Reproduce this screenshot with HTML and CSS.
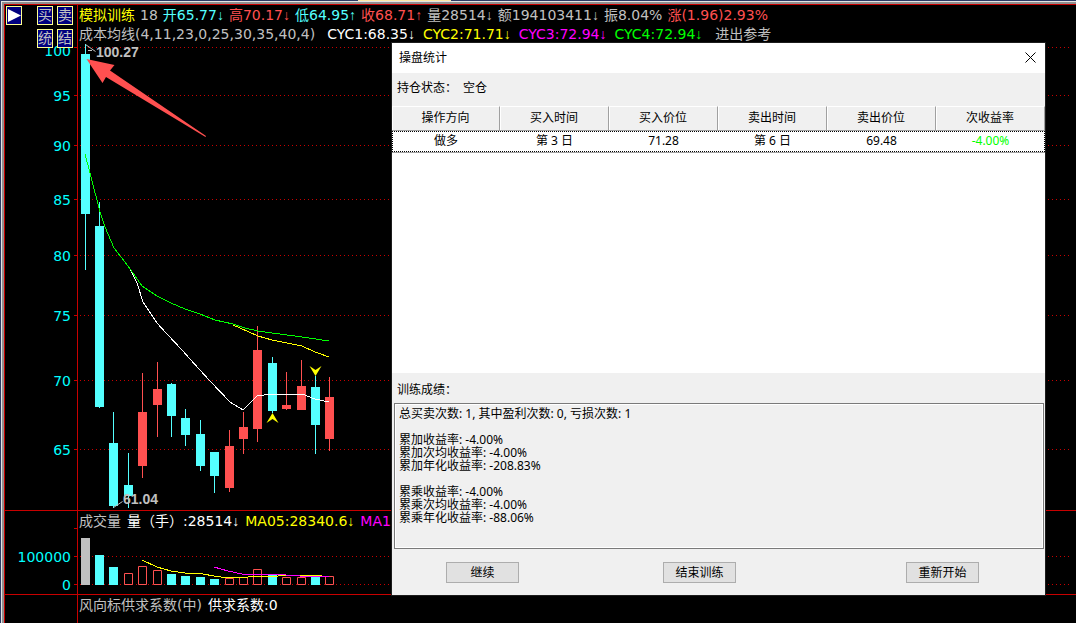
FILE: index.html
```html
<!DOCTYPE html>
<html lang="zh-CN">
<head>
    <meta charset="UTF-8">
    <meta name="viewport" content="width=device-width, initial-scale=1.0">
    <title>模拟训练</title>
    <link rel="stylesheet" href="styles.css">
</head>
<body>
    <div class="topbar"><span class="tab"></span></div>
    <main class="terminal">
        <!-- K line -->
        <section class="panel price">
            <svg class="plot">
                <g transform="translate(-5 -5)">
                    <g class="grid">
                        <path d="M74 47.5h3M74 95.5h3M74 145.5h3M74 199.5h3M74 255.5h3M74 315.5h3M74 380.5h3M74 449.5h3"/>
                        <g class="dots">
                            <line x1="80" y1="47.5" x2="100%" y2="47.5"/>
                            <line x1="80" y1="95.5" x2="100%" y2="95.5"/>
                            <line x1="80" y1="145.5" x2="100%" y2="145.5"/>
                            <line x1="80" y1="199.5" x2="100%" y2="199.5"/>
                            <line x1="80" y1="255.5" x2="100%" y2="255.5"/>
                            <line x1="80" y1="315.5" x2="100%" y2="315.5"/>
                            <line x1="80" y1="380.5" x2="100%" y2="380.5"/>
                            <line x1="80" y1="449.5" x2="100%" y2="449.5"/>
                        </g>
                    </g>
                    <g class="scale">
                        <text x="71" y="56">100</text>
                        <text x="71" y="101">95</text>
                        <text x="71" y="151">90</text>
                        <text x="71" y="205">85</text>
                        <text x="71" y="261">80</text>
                        <text x="71" y="321">75</text>
                        <text x="71" y="386">70</text>
                        <text x="71" y="455">65</text>
                    </g>
                    <!-- falling days -->
                    <path class="down" d="M81 54h9v160h-9zM85 44h1v226h-1zM95 226h9v181h-9zM99 202h1v206h-1zM109 443h9v63h-9zM113 412h1v96h-1zM124 485h9v11h-9zM128 453h1v55h-1zM167 384h9v32h-9zM171 383h1v54h-1zM181 418h9v17h-9zM185 409h1v37h-1zM196 434h9v32h-9zM200 420h1v51h-1zM210 452h9v24h-9zM214 452h1v41h-1zM268 363h9v48h-9zM272 357h1v56h-1zM311 387h9v38h-9zM315 376h1v78h-1z"/>
                    <!-- rising days -->
                    <path class="up" d="M138 412h9v54h-9zM142 373h1v105h-1zM153 389h9v16h-9zM157 362h1v75h-1zM225 446h9v42h-9zM229 430h1v62h-1zM239 427h9v12h-9zM243 412h1v42h-1zM253 350h9v79h-9zM257 326h1v116h-1zM282 405h9v4h-9zM286 372h1v38h-1zM297 386h9v24h-9zM301 360h1v50h-1zM325 397h9v42h-9zM329 377h1v74h-1z"/>
                    <polyline class="line white" points="129,267 137,283 143,302 157,323 167,334 182,350 190,359 210,381 230,402 243,410 257,396 272,394 287,395 302,394 315,399 329,402"/>
                    <polyline class="line yellow" points="233,325 240,328 258,336 272,340 287,343 302,346 315,352 329,357"/>
                    <polyline class="line green" points="85,154 90,173 100,212 105,227 114,248 128,266 142,286 157,296 171,303 185,309 200,314 215,320 233,324 245,328 258,331 272,333 287,335 302,337 329,341"/>
                    <!-- buy and sell marks -->
                    <path class="mark" d="M272.5 413l3 5 3 5-6-4-6 4 3-5z"/>
                    <path class="mark" d="M315.5 376l-3-5-3-5 6 4 6-4-3 5z"/>
                    <path class="leader" d="M85.5 44.5l10 7M88 50.5h4M113.5 507.5l9-6"/>
                    <text class="tag" x="96" y="57">100.27</text>
                    <text class="tag" x="123" y="504">61.04</text>
                    <polygon class="pointer" points="86.5,59 114.5,65 110,70.5 206,136 205.5,137 106,77 102.5,83"/>
                </g>
            </svg>
            <div class="tools">
                <button type="button" class="tool play" aria-label="播放"><svg width="14" height="17"><path d="M1 2L14 8.5 1 15z"/></svg></button>
                <button type="button" class="tool">买</button>
                <button type="button" class="tool">卖</button>
                <button type="button" class="tool second">统</button>
                <button type="button" class="tool">结</button>
            </div>
            <div class="info">
                <p class="quote">
                    <span class="c-yellow">模拟训练</span>
                    <span>18</span>
                    <span class="c-cyan">开65.77<i>↓</i></span>
                    <span class="c-red">高70.17<i>↓</i></span>
                    <span class="c-cyan">低64.95<i>↑</i></span>
                    <span class="c-red">收68.71<i>↑</i></span>
                    <span>量28514<i>↓</i></span>
                    <span>额194103411<i>↓</i></span>
                    <span>振8.04%</span>
                    <span class="c-red">涨(1.96)2.93%</span>
                </p>
                <p class="averages">
                    <span class="params">成本均线(4,11,23,0,25,30,35,40,4)</span>
                    <span class="c-white">CYC1:68.35<i>↓</i></span>
                    <span class="c-yellow">CYC2:71.71<i>↓</i></span>
                    <span class="c-magenta">CYC3:72.94<i>↓</i></span>
                    <span class="c-green">CYC4:72.94<i>↓</i></span>
                    <span class="ref">进出参考</span>
                </p>
            </div>
        </section>

        <!-- volume -->
        <section class="panel volume">
            <svg class="plot">
                <g transform="translate(-5 -511)">
                    <g class="grid">
                        <path d="M74 528.5h3M74 556.5h3M74 584.5h3"/>
                        <g class="dots">
                            <line x1="80" y1="556.5" x2="100%" y2="556.5"/>
                            <line x1="80" y1="584.5" x2="100%" y2="584.5"/>
                        </g>
                    </g>
                    <g class="scale">
                        <text x="71" y="562">100000</text>
                        <text x="71" y="590">0</text>
                    </g>
                    <path class="flat" d="M81 538h9v47h-9z"/>
                    <path class="down" d="M95 555h9v30h-9zM109 567h9v18h-9zM167 574h9v11h-9zM181 576h9v9h-9zM196 577h9v8h-9zM210 579h9v6h-9zM268 575h9v10h-9zM311 577h9v8h-9z"/>
                    <path class="hollow" d="M124.5 573.5h8v11h-8zM138.5 566.5h8v18h-8zM153.5 570.5h8v14h-8zM225.5 578.5h8v6h-8zM239.5 577.5h8v7h-8zM253.5 569.5h8v15h-8zM282.5 577.5h8v7h-8zM297.5 577.5h8v7h-8zM325.5 576.5h8v8h-8z"/>
                    <polyline class="line yellow" points="142,560 157,567 171,571 185,573 203,574 214,576 228,578 248,577 258,576 278,576 295,575 322,575"/>
                    <polyline class="line magenta" points="214,567 228,571 242,574 278,574 286,575 300,576 329,576"/>
                </g>
            </svg>
            <div class="info">
                <p>
                    <span>成交量</span>
                    <span class="c-white">量（手）:28514<i>↓</i></span>
                    <span class="c-yellow">MA05:28340.6<i>↓</i></span>
                    <span class="c-magenta">MA10</span>
                </p>
            </div>
        </section>

        <section class="panel supply">
            <div class="info">
                <p>
                    <span>风向标供求系数(中)</span>
                    <span class="c-white">供求系数:0</span>
                </p>
            </div>
        </section>
    </main>

    <div class="dialog" role="dialog" aria-labelledby="dialogTitle">
        <header class="titlebar">
            <h1 id="dialogTitle">操盘统计</h1>
            <button type="button" class="close" aria-label="关闭"><svg width="11" height="11"><path d="M0.5 0.5l10 10M10.5 0.5l-10 10"/></svg></button>
        </header>
        <p class="status"><span>持仓状态：</span><span>空仓</span></p>
        <div class="list">
            <table>
                <thead>
                    <tr>
                        <th>操作方向</th>
                        <th>买入时间</th>
                        <th>买入价位</th>
                        <th>卖出时间</th>
                        <th>卖出价位</th>
                        <th>次收益率</th>
                    </tr>
                </thead>
                <tbody>
                    <tr>
                        <td>做多</td>
                        <td>第 3 日</td>
                        <td>71.28</td>
                        <td>第 6 日</td>
                        <td>69.48</td>
                        <td class="loss">-4.00%</td>
                    </tr>
                </tbody>
            </table>
        </div>
        <label class="result-label" for="result">训练成绩：</label>
        <textarea id="result" class="result" readonly>
总买卖次数: 1, 其中盈利次数: 0, 亏损次数: 1

累加收益率: -4.00%
累加次均收益率: -4.00%
累加年化收益率: -208.83%

累乘收益率: -4.00%
累乘次均收益率: -4.00%
累乘年化收益率: -88.06%</textarea>
        <footer class="actions">
            <button type="button">继续</button>
            <button type="button" class="finish">结束训练</button>
            <button type="button">重新开始</button>
        </footer>
    </div>
</body>
</html>
```

FILE: styles.css
```css
* {
    box-sizing: border-box;
}

body {
    margin: 0;
    height: 100vh;
    display: flex;
    flex-direction: column;
    overflow: hidden;
    background-color: #000;
    border-left: 1px solid #2c3a66;
    font-family: "DejaVu Sans", "Noto Sans CJK SC", sans-serif;
    font-size: 14px;
    color: #c0c0c0;
}

p, h1 {
    margin: 0;
}

button {
    padding: 0;
    font-family: inherit;
    cursor: pointer;
}

.topbar {
    height: 1px;
    background-color: #2c3a66;
}

.tab {
    display: block;
    width: 93px;
    height: 1px;
    margin-left: 357px;
    background-color: #ffe8a6;
}

.terminal {
    flex: 1;
    display: grid;
    grid-template-rows: 1fr 84px 29px;
    margin: 1px 0 0 1px;
    border-top: 2px solid #909090;
    border-left: 2px solid #909090;
    box-shadow: 0 0 0 1px #e4e4e4;
}

/* panels: scale column on the left, plot on the right */
.panel {
    display: grid;
    grid-template-columns: 72px 1fr;
    min-height: 0;
    border-top: 1px solid #c80000;
    border-left: 1px solid #c80000;
}

.plot {
    grid-area: 1 / 1 / 2 / 3;
    width: 100%;
    height: 100%;
}

.info {
    grid-area: 1 / 2;
    padding: 1px 0 0 1px;
    border-left: 1px solid #c80000;
    overflow: hidden;
}

.info p {
    display: flex;
    gap: 6px;
    line-height: 19px;
    white-space: nowrap;
}

.info .quote {
    gap: 5px;
}

.info .averages {
    gap: 8px;
}

.info i {
    font-family: "Liberation Sans", sans-serif;
    font-style: normal;
}

.params {
    margin-right: 4px;
}

.ref {
    margin-left: 5px;
}

.c-yellow { color: #ffff00; }
.c-cyan { color: #54ffff; }
.c-red { color: #ff5050; }
.c-white { color: #fff; }
.c-magenta { color: #ff00ff; }
.c-green { color: #00ff00; }

.tools {
    grid-area: 1 / 1;
    display: grid;
    grid-template-columns: 31px 20px 16px;
    grid-auto-rows: 19px;
    row-gap: 4px;
    align-content: start;
    padding: 1px;
    z-index: 1;
}

.tool {
    width: 16px;
    height: 19px;
    border: 1px solid #ffff90;
    background-color: #000080;
    color: #c0c0c0;
    font-size: 14px;
    line-height: 17px;
}

.tool.second {
    grid-column: 2;
}

.play svg {
    display: block;
    fill: #fff;
}

/* chart drawing */
.grid path, .grid line {
    stroke: #c80000;
}

.dots {
    stroke-dasharray: 1 3;
}

.scale {
    fill: #00ffff;
    text-anchor: end;
}

.down { fill: #54ffff; }
.up { fill: #ff5050; }
.flat { fill: #c0c0c0; }
.mark { fill: #ffff00; }
.pointer { fill: #ff5050; }

.hollow {
    fill: #000;
    stroke: #ff5050;
}

.line {
    fill: none;
    stroke-width: 1;
    shape-rendering: crispEdges;
}

.white { stroke: #fff; }
.yellow { stroke: #ffff00; }
.green { stroke: #00ff00; }
.magenta { stroke: #ff00ff; }

.leader {
    fill: none;
    stroke: #c0c0c0;
}

.tag {
    fill: #c0c0c0;
    font-family: "Liberation Sans", sans-serif;
    font-weight: bold;
}

/* statistics window */
.dialog {
    position: absolute;
    z-index: 2;
    top: 43px;
    left: 392px;
    right: 31px;
    display: flex;
    flex-direction: column;
    background-color: #f0f0f0;
    outline: 1px solid #1c1c1c;
    color: #000;
    font-family: "Noto Sans", "Noto Sans CJK SC", sans-serif;
    font-size: 12px;
}

.titlebar {
    display: flex;
    justify-content: space-between;
    align-items: center;
    height: 30px;
    padding: 0 9px 2px 7px;
    background-color: #fff;
}

.titlebar h1 {
    font-size: 12px;
    font-weight: normal;
}

.close {
    border: none;
    background: none;
}

.close svg {
    display: block;
    stroke: #000;
}

.status {
    display: flex;
    gap: 6px;
    padding-left: 5px;
    line-height: 29px;
    height: 33px;
}

.list {
    height: 267px;
    background-color: #fff;
}

table {
    width: 100%;
    table-layout: fixed;
    border-collapse: separate;
    border-spacing: 0;
    border-bottom: 1px solid #a0a0a0;
}

th, td {
    padding: 0 0 2px;
    font-weight: normal;
    text-align: center;
}

th {
    height: 25px;
    line-height: 18px;
    background-color: #f0f0f0;
    border-top: 1px solid #fff;
    border-right: 1px solid #a0a0a0;
    border-bottom: 1px solid #a0a0a0;
    box-shadow: inset 1px 0 #fff;
}

th:first-child {
    width: 108px;
}

td {
    height: 21px;
    line-height: 17px;
}

tbody tr {
    outline: 1px dotted #000;
    outline-offset: -1px;
}

.loss {
    color: #00ff00;
}

.result-label {
    height: 30px;
    padding-left: 5px;
    line-height: 33px;
}

.result {
    display: block;
    height: 146px;
    margin: 0 1px 0 2px;
    padding: 3px 4px;
    border: 1px solid #7a7a7a;
    border-radius: 0;
    outline: none;
    resize: none;
    overflow: hidden;
    background-color: #f0f0f0;
    box-shadow: inset 0 0 0 1px #fff;
    color: #000;
    font-family: inherit;
    font-size: 12px;
    line-height: 13px;
}

.actions {
    display: flex;
    justify-content: space-between;
    padding: 13px 66px 12px 54px;
}

.actions button {
    width: 73px;
    height: 21px;
    border: 1px solid #adadad;
    background-color: #e1e1e1;
    color: #000;
    font-size: 12px;
    line-height: 19px;
}

.actions .finish {
    margin-right: 26px;
}
```
